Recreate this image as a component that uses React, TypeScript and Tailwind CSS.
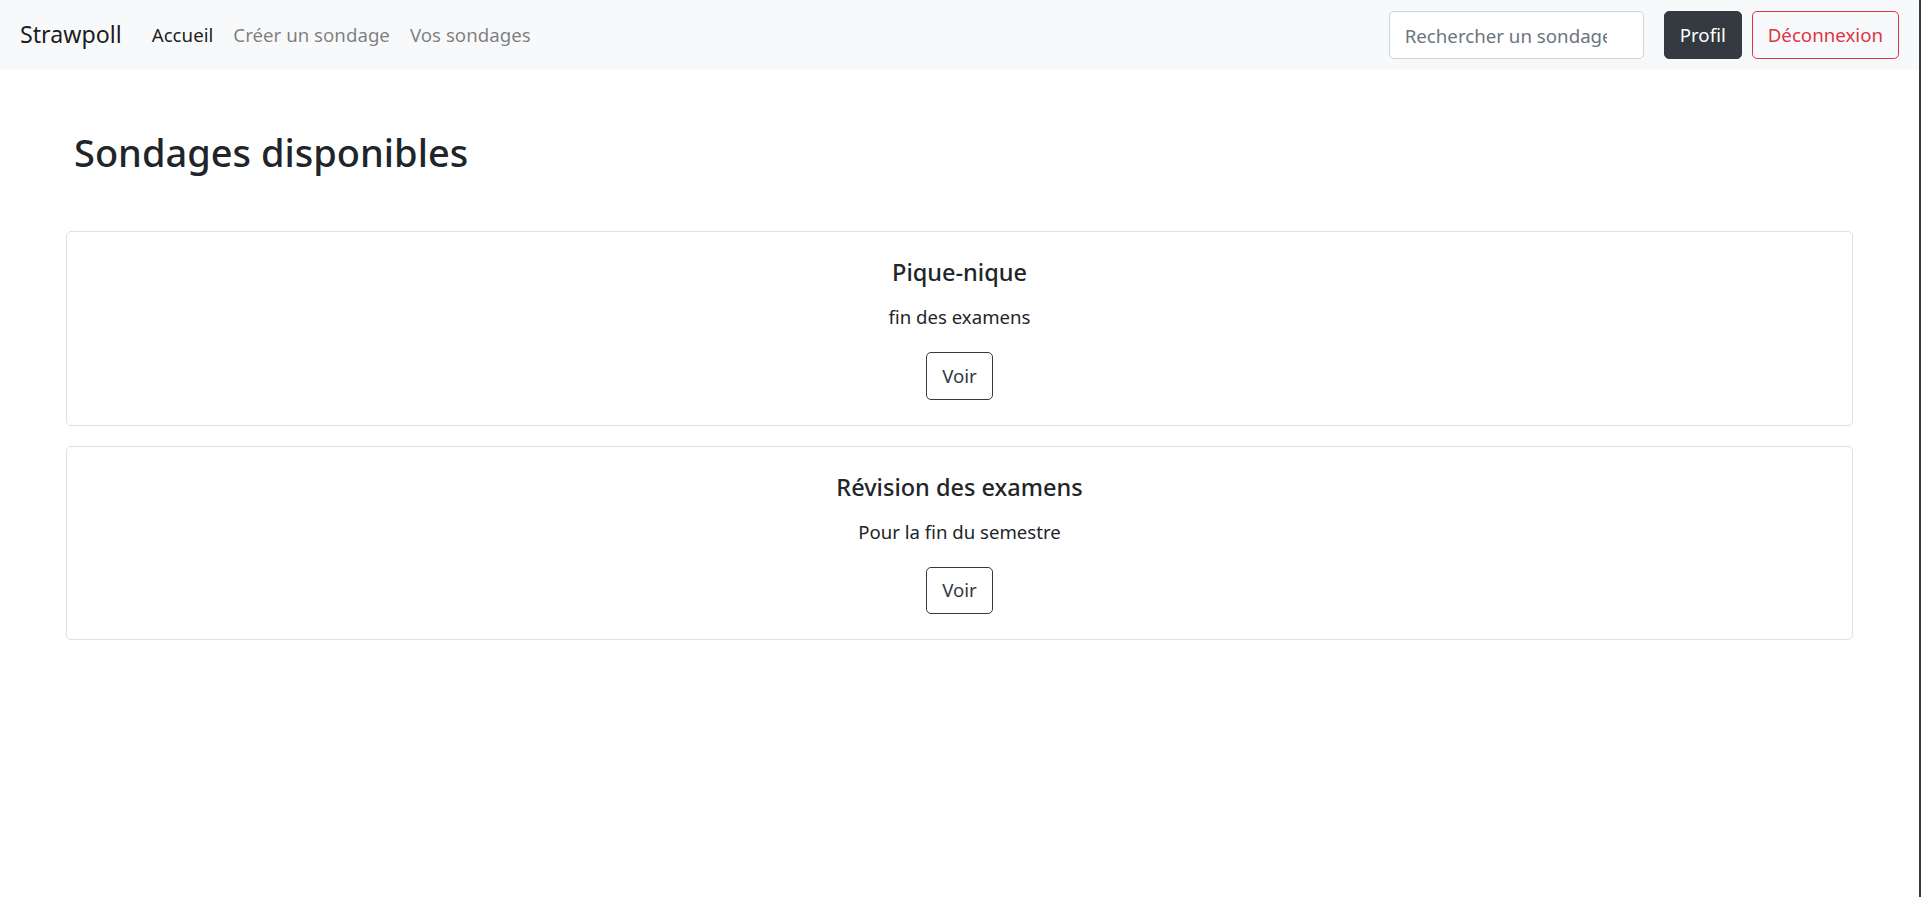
import React from "react";

const polls = [
  { title: "Pique-nique", desc: "fin des examens" },
  { title: "Révision des examens", desc: "Pour la fin du semestre" },
];

export default function App() {
  return (
    <div
      className="flex min-h-screen w-full bg-white text-[#212529]"
      style={{ fontFamily: '"Noto Sans", "Open Sans", Arial, sans-serif' }}
    >
      <div className="flex-1 min-w-0">
        <nav className="flex h-[70px] items-center bg-[#f8f9fa] px-[20px]">
          <a className="mr-[20px] text-[23.2px] leading-[37.5px] text-black/90">Strawpoll</a>
          <a className="px-[10px] text-[18.7px] leading-[30px] text-black/90">Accueil</a>
          <a className="px-[10px] text-[18.7px] leading-[30px] text-black/50">Créer un sondage</a>
          <a className="px-[10px] text-[18.7px] leading-[30px] text-black/50">Vos sondages</a>
          <div className="ml-auto flex items-center">
            <input
              type="text"
              placeholder="Rechercher un sondage"
              className="h-[47.5px] w-[255px] rounded-[5px] border border-[#ced4da] bg-white pl-[15px] pr-[36px] text-[18.7px] text-[#495057] outline-none placeholder:text-[#6c757d]"
            />
            <button className="ml-[20px] h-[47.5px] rounded-[5px] border border-[#343a40] bg-[#343a40] px-[15px] text-[18.7px] leading-[30px] text-white">
              Profil
            </button>
            <button className="ml-[10px] h-[47.5px] rounded-[5px] border border-[#dc3545] bg-transparent px-[15px] text-[18.7px] leading-[30px] text-[#dc3545]">
              Déconnexion
            </button>
          </div>
        </nav>

        <main className="px-[66px]">
          <h2 className="ml-[8px] pt-[58px] pb-[55px] text-[38px] font-medium leading-[48px]">
            Sondages disponibles
          </h2>
          <div className="flex flex-col gap-[20px]">
            {polls.map((p) => (
              <div
                key={p.title}
                className="rounded-[5px] border border-[#dfdfdf] p-[25px] text-center"
              >
                <h5 className="mb-[15px] text-[23.5px] font-medium leading-[30px]">{p.title}</h5>
                <p className="mb-[20px] text-[18.6px] leading-[30px]">{p.desc}</p>
                <button className="h-[47.5px] rounded-[5px] border border-[#343a40] px-[15px] text-[18.7px] leading-[30px] text-[#343a40]">
                  Voir
                </button>
              </div>
            ))}
          </div>
        </main>
      </div>
      <div className="w-[2px] shrink-0 bg-[#3a3a3a]" />
    </div>
  );
}
